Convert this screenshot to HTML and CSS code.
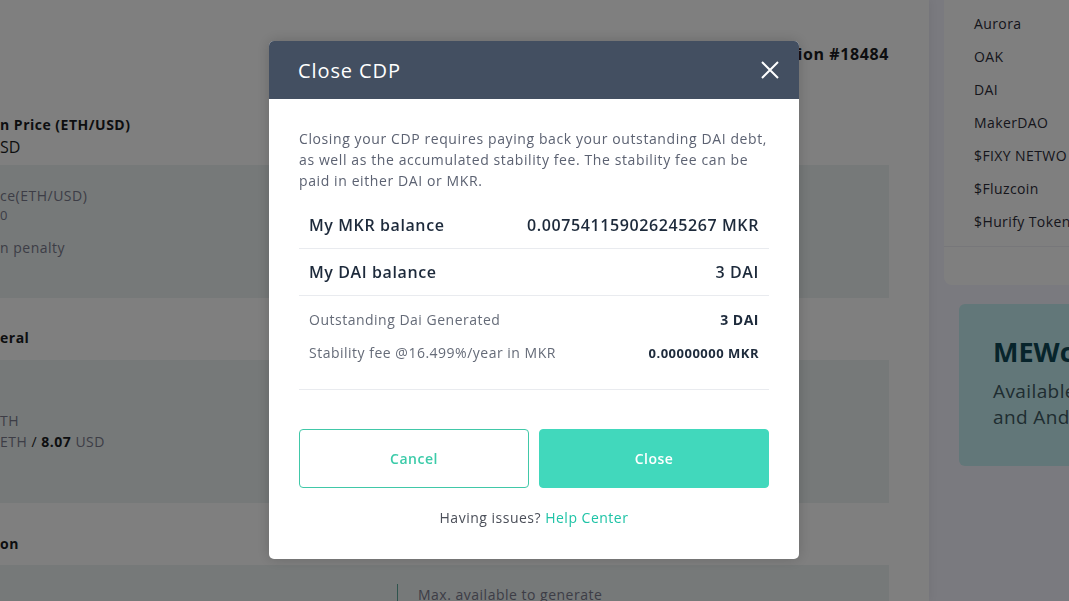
FILE: index.html
```html
<!DOCTYPE html>
<html lang="en">
<head>
<meta charset="utf-8">
<title>Close CDP</title>
<link rel="stylesheet" href="styles.css">
</head>
<body>
<div class="page">
  <main class="main">
    <div class="top-bar">
      <div class="top-title">ion #18484</div>
    </div>
    <section class="block">
      <div class="block-head">
        <div class="head-title">n Price (ETH/USD)</div>
        <div class="head-value">SD</div>
      </div>
      <div class="card card-1">
        <div class="card-col">
          <div class="muted">ce(ETH/USD)</div>
          <div class="small-val">0</div>
          <div class="muted spaced">n penalty</div>
        </div>
      </div>
    </section>
    <section class="block">
      <div class="block-head single">
        <div class="head-title">eral</div>
      </div>
      <div class="card card-2">
        <div class="card-col">
          <div class="muted">TH</div>
          <div class="muted">ETH <b class="slash">/</b> <b>8.07</b> USD</div>
        </div>
      </div>
    </section>
    <section class="block">
      <div class="block-head single">
        <div class="head-title">on</div>
      </div>
      <div class="card card-3">
        <div class="card-col half"></div>
        <div class="card-col split">
          <div class="muted">Max. available to generate</div>
        </div>
      </div>
    </section>
  </main>
  <aside class="sidebar">
    <div class="token-card">
      <ul class="token-list">
        <li>Aurora</li>
        <li>OAK</li>
        <li>DAI</li>
        <li>MakerDAO</li>
        <li>$FIXY NETWO</li>
        <li>$Fluzcoin</li>
        <li>$Hurify Token</li>
      </ul>
      <div class="token-foot"></div>
    </div>
    <div class="mew-card">
      <div class="mew-title">MEWc</div>
      <div class="mew-text">Available<br>and And</div>
    </div>
  </aside>
</div>

<div class="overlay">
  <div class="modal">
    <div class="modal-head">
      <h2 class="modal-title">Close CDP</h2>
      <button class="modal-x" aria-label="Close">
        <svg width="18" height="18" viewBox="0 0 18 18"><path d="M1 1 L17 17 M17 1 L1 17" stroke="#ffffff" stroke-width="2" fill="none"/></svg>
      </button>
    </div>
    <div class="modal-body">
      <p class="intro">Closing your CDP requires paying back your outstanding DAI debt, as well as the accumulated stability fee. The stability fee can be paid in either DAI or MKR.</p>
      <div class="bal-row">
        <span>My MKR balance</span>
        <span>0.007541159026245267 MKR</span>
      </div>
      <div class="bal-row">
        <span>My DAI balance</span>
        <span>3 DAI</span>
      </div>
      <div class="details">
        <div class="det-row">
          <span>Outstanding Dai Generated</span>
          <span class="det-val">3 DAI</span>
        </div>
        <div class="det-row">
          <span>Stability fee @16.499%/year in MKR</span>
          <span class="det-val small">0.00000000 MKR</span>
        </div>
      </div>
      <div class="actions">
        <button class="btn btn-outline">Cancel</button>
        <button class="btn btn-fill">Close</button>
      </div>
      <div class="help">Having issues? <a class="help-link">Help Center</a></div>
    </div>
  </div>
</div>
</body>
</html>
```
FILE: styles.css
```css
* { box-sizing: border-box; }
html, body {
  margin: 0;
  padding: 0;
  width: 1069px;
  height: 601px;
  overflow: hidden;
  font-family: "Open Sans", "Liberation Sans", sans-serif;
  color: #2f3340;
}
.page {
  display: flex;
  width: 1069px;
  height: 601px;
  background: #f4f4fe;
}
.main {
  width: 929px;
  flex: none;
  background: #ffffff;
  overflow: hidden;
  padding-right: 40px;
  box-shadow: 2px 0 8px rgba(0,0,0,0.05);
}
.top-bar {
  height: 100px;
  display: flex;
  justify-content: flex-end;
  padding-top: 43px;
}
.top-title {
  font-weight: 700;
  font-size: 16px;
  letter-spacing: 0.6px;
  color: #1b1d22;
}
.block-head {
  height: 65px;
  padding-top: 15px;
}
.block-head.single {
  height: 62px;
  padding-top: 30px;
}
.block:last-child .block-head.single { padding-top: 31px; }
.head-title {
  font-weight: 700;
  font-size: 14px;
  letter-spacing: 0.5px;
  color: #1b1d22;
}
.head-value {
  font-size: 16px;
  color: #1b1d22;
  margin-top: 2px;
}
.card {
  background: #ecf2f3;
  display: flex;
  padding: 20px 0 0 0;
}
.card-1 { height: 133px; }
.card-2 { height: 143px; padding-top: 50px; }
.card-3 { height: 60px; padding-top: 20px; }
.half { width: 397px; flex: none; }
.split { border-left: 1px solid #5fa89c; padding-left: 20px; padding-top: 0; margin-top: -1px; }
.muted {
  font-size: 14px;
  letter-spacing: 0.5px;
  color: #7a7b8c;
  line-height: 21px;
}
.muted b { color: #1b1d22; font-weight: 700; }
.muted b.slash { font-weight: 400; }
.small-val { font-size: 13px; color: #7a7b8c; }
.spaced { margin-top: 13px; }

.sidebar {
  flex: 1;
  padding-left: 15px;
  display: flex;
  flex-direction: column;
  gap: 19px;
}
.token-card {
  background: #ffffff;
  border-radius: 0 0 0 8px;
  height: 285px;
}
.token-list {
  list-style: none;
  margin: 0;
  padding: 13px 0 0 30px;
  font-size: 14px;
  letter-spacing: 0.4px;
  color: #2c2c38;
}
.token-list li {
  height: 33px;
  line-height: 22px;
  white-space: nowrap;
}
.token-foot {
  border-top: 1px solid #eeeef4;
  margin-top: 2px;
}
.mew-card {
  margin-left: 15px;
  height: 162px;
  background: #c4eef2;
  border-radius: 6px 0 0 6px;
  padding: 29px 0 0 34px;
  white-space: nowrap;
}
.mew-title {
  font-size: 27px;
  font-weight: 700;
  color: #0f4957;
}
.mew-text {
  font-size: 19px;
  letter-spacing: 0.4px;
  color: #3e5a62;
  line-height: 26px;
  margin-top: 8px;
}

.overlay {
  position: fixed;
  inset: 0;
  background: rgba(0,0,0,0.5);
  display: flex;
  justify-content: flex-start;
  align-items: flex-start;
  padding: 41px 0 0 269px;
}
.modal {
  width: 530px;
  background: #ffffff;
  border-radius: 5px;
  overflow: hidden;
  box-shadow: 0 0 14px rgba(0,0,0,0.18);
}
.modal-head {
  height: 58px;
  background: #434f61;
  display: flex;
  align-items: center;
  justify-content: space-between;
  padding: 0 20px 0 29px;
}
.modal-title {
  margin: 0;
  font-size: 20px;
  font-weight: 400;
  letter-spacing: 0.9px;
  color: #ffffff;
}
.modal-x {
  background: none;
  border: 0;
  padding: 0;
  width: 18px;
  height: 18px;
  display: flex;
}
.modal-body {
  padding: 29px 30px 31px 30px;
}
.intro {
  margin: 0 0 11px 0;
  font-size: 14px;
  line-height: 21px;
  letter-spacing: 0.6px;
  color: #5c6272;
}
.bal-row {
  display: flex;
  justify-content: space-between;
  align-items: center;
  height: 47px;
  padding: 0 10px 1px 10px;
  border-bottom: 1px solid #e9ebef;
  font-size: 16px;
  font-weight: 600;
  letter-spacing: 0.6px;
  color: #1d2a3b;
}
.details {
  padding: 7px 10px 20px 10px;
  border-bottom: 1px solid #e9ebef;
}
.det-row {
  display: flex;
  justify-content: space-between;
  align-items: center;
  height: 33px;
  font-size: 14px;
  letter-spacing: 0.5px;
  color: #656b78;
}
.det-val {
  font-weight: 700;
  font-size: 14px;
  color: #1d2a3b;
}
.det-val.small { font-size: 13px; }
.actions {
  display: flex;
  gap: 10px;
  margin-top: 39px;
}
.btn {
  flex: 1;
  height: 59px;
  border-radius: 4px;
  font-family: inherit;
  font-size: 14px;
  font-weight: 600;
  letter-spacing: 0.5px;
  cursor: pointer;
}
.btn-outline {
  background: #ffffff;
  border: 1px solid #41c8a8;
  color: #3ccba9;
}
.btn-fill {
  background: #41d8bc;
  border: 1px solid #41d8bc;
  color: #ffffff;
}
.help {
  text-align: center;
  margin-top: 20px;
  font-size: 14px;
  line-height: 20px;
  letter-spacing: 0.5px;
  color: #4b4f59;
}
.help-link {
  color: #1ec3a6;
}
```
